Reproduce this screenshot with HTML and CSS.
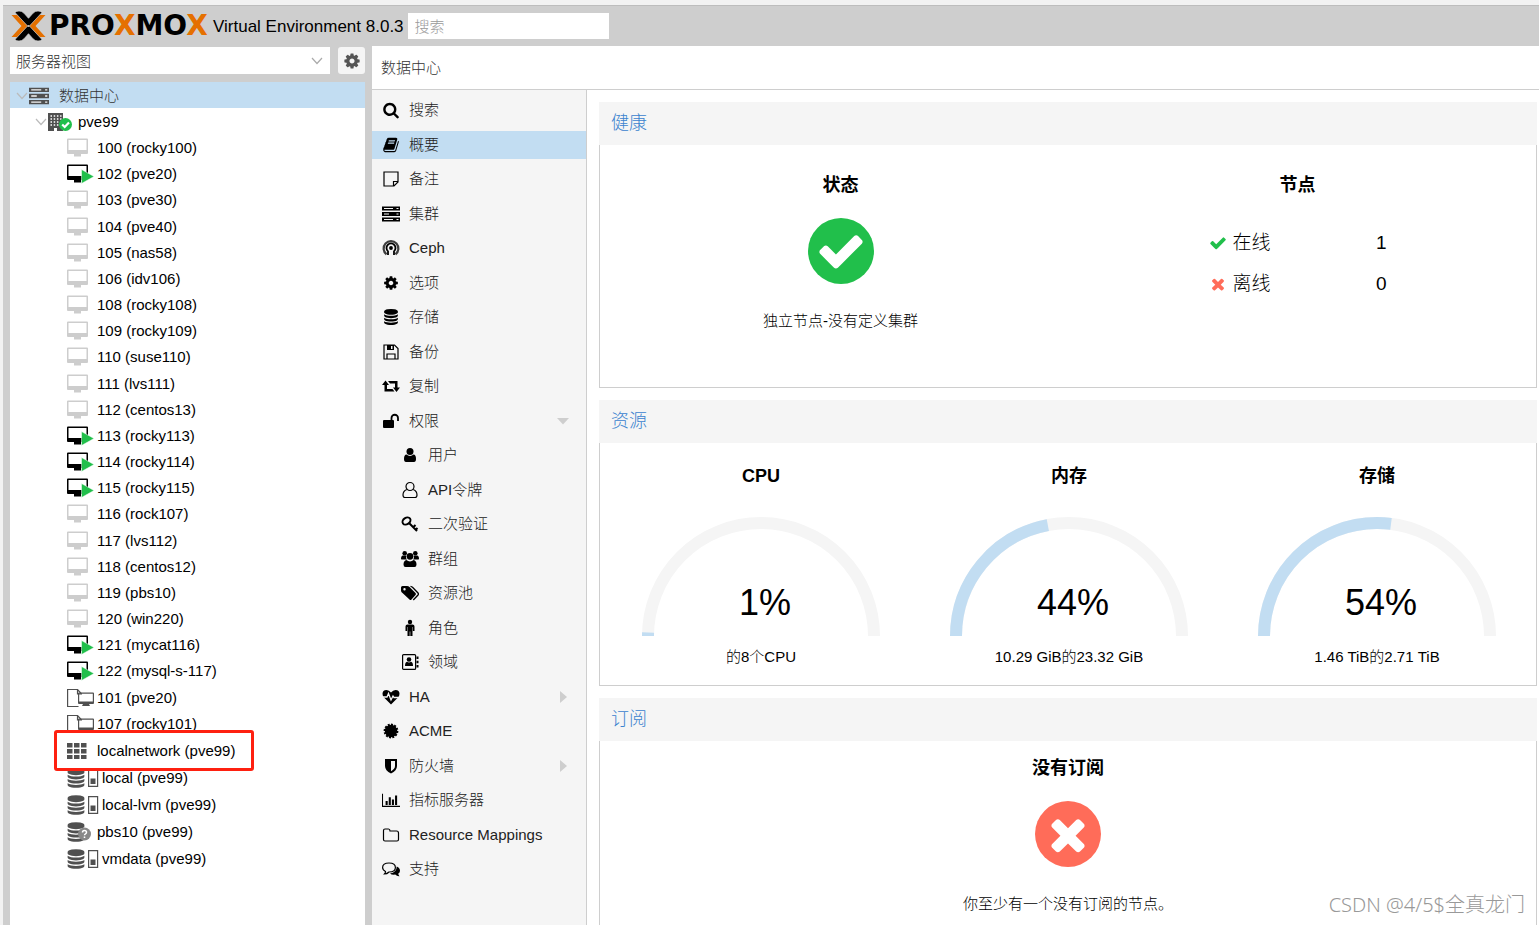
FILE: index.html
```html
<!DOCTYPE html>
<html lang="zh-CN">
<head>
<meta charset="utf-8">
<title>pve99 - Proxmox Virtual Environment</title>
<link rel="stylesheet" href="styles.css">
</head>
<body>
<svg class="defs" aria-hidden="true">
  <symbol id="cog" viewBox="-112 -112 2016 2016"><path d="M1152 896q0-106-75-181t-181-75-181 75-75 181 75 181 181 75 181-75 75-181zm512-109v222q0 12-8 23t-20 13l-185 28q-19 54-39 91 35 50 107 138 10 12 10 25t-9 23q-27 37-99 108t-94 71q-12 0-26-9l-138-108q-44 23-91 38-16 136-29 186-7 28-36 28h-222q-14 0-24.5-8.5t-11.5-21.5l-28-184q-49-16-90-37l-141 107q-10 9-25 9-14 0-25-11-126-114-165-168-7-10-7-23 0-12 8-23 15-21 51-66.5t54-70.5q-27-50-41-99l-183-27q-13-2-21-12.5t-8-23.5v-222q0-12 8-23t19-13l186-28q14-46 39-92-40-57-107-138-10-12-10-24 0-10 9-23 26-36 98.5-107.5t94.5-71.5q13 0 26 10l138 107q44-23 91-38 16-136 29-186 7-28 36-28h222q14 0 24.5 8.5t11.5 21.5l28 184q49 16 90 37l142-107q9-9 24-9 13 0 25 10 129 119 165 170 7 8 7 22 0 12-8 23-15 21-51 66.5t-54 70.5q26 50 41 98l183 28q13 2 21 12.5t8 23.5z"/></symbol>
  <symbol id="search" viewBox="-64 -64 1920 1920"><path d="M1216 832q0-185-131.5-316.5t-316.5-131.5-316.5 131.5-131.5 316.5 131.5 316.5 316.5 131.5 316.5-131.5 131.5-316.5zm512 832q0 52-38 90t-90 38q-54 0-90-38l-343-342q-179 124-399 124-143 0-273.5-55.5t-225-150-150-225-55.5-273.5 55.5-273.5 150-225 225-150 273.5-55.5 273.5 55.5 225 150 150 225 55.5 273.5q0 220-124 399l343 343q37 37 37 90z"/></symbol>
  <symbol id="book" viewBox="-64 -64 1920 1920"><path d="M1703 478q40 57 18 129l-275 906q-19 64-76.5 107.5t-122.5 43.5h-923q-77 0-148.5-53.5t-99.5-131.5q-24-67-2-127 0-4 3-27t4-37q1-8-3-21.5t-3-19.5q2-11 8-21t16.5-23.5 16.5-23.5q23-38 45-91.5t30-91.5q3-10 .5-30t-.5-28q3-11 17-28t17-23q21-36 42-92t25-90q1-9-2.5-32t.5-28q4-13 22-30.5t22-22.5q19-26 42.5-84.5t27.5-96.5q1-8-3-25.5t-2-26.5q2-8 9-18t18-23 17-21q8-12 16.5-30.5t15-35 16-36 19.5-32 26.5-23.5 36-11.5 47.5 5.5l-1 3q38-9 51-9h761q74 0 114 56t18 130l-274 906q-36 119-71.5 153.5t-128.5 34.5h-869q-27 0-38 15-11 16-1 43 24 70 144 70h923q29 0 56-15.5t35-41.5l300-987q7-22 5-57 38 15 59 43zm-1064 2q-4 13 2 22.5t20 9.5h608q13 0 25.5-9.5t16.5-22.5l21-64q4-13-2-22.5t-20-9.5h-608q-13 0-25.5 9.5t-16.5 22.5zm-83 256q-4 13 2 22.5t20 9.5h608q13 0 25.5-9.5t16.5-22.5l21-64q4-13-2-22.5t-20-9.5h-608q-13 0-25.5 9.5t-16.5 22.5z"/></symbol>
  <symbol id="database" viewBox="-112 -112 2016 2016"><path d="M896 768q237 0 443-43t325-127v170q0 69-103 128t-280 93.5-385 34.5-385-34.5-280-93.5-103-128v-170q119 84 325 127t443 43zm0 768q237 0 443-43t325-127v170q0 69-103 128t-280 93.5-385 34.5-385-34.5-280-93.5-103-128v-170q119 84 325 127t443 43zm0-384q237 0 443-43t325-127v170q0 69-103 128t-280 93.5-385 34.5-385-34.5-280-93.5-103-128v-170q119 84 325 127t443 43zm0-1152q208 0 385 34.5t280 93.5 103 128v128q0 69-103 128t-280 93.5-385 34.5-385-34.5-280-93.5-103-128v-128q0-69 103-128t280-93.5 385-34.5z"/></symbol>
  <symbol id="check" viewBox="0 0 1792 1792"><path d="M1671 566q0 40-28 68l-724 724-136 136q-28 28-68 28t-68-28l-136-136-362-362q-28-28-28-68t28-68l136-136q28-28 68-28t68 28l294 295 656-657q28-28 68-28t68 28l136 136q28 28 28 68z"/></symbol>
  <symbol id="times" viewBox="0 0 1792 1792"><path d="M1490 1322q0 40-28 68l-136 136q-28 28-68 28t-68-28l-294-294-294 294q-28 28-68 28t-68-28l-136-136q-28-28-28-68t28-68l294-294-294-294q-28-28-28-68t28-68l136-136q28-28 68-28t68 28l294 294 294-294q28-28 68-28t68 28l136 136q28 28 28 68t-28 68l-294 294 294 294q28 28 28 68z"/></symbol>
  <symbol id="note" viewBox="0 0 18 18"><path d="M2 2h14v10l-4 4H2z M16 11.500h-4.500V16" fill="none" stroke="currentColor" stroke-width="1.200"/></symbol>
  <symbol id="server" viewBox="0 0 18 18"><path d="M0 1.500h18v4H0z M0 7h18v4H0z M0 12.500h18v4H0z"/><path d="M2 3.500h9 M2 9h5 M2 14.500h9 M14.500 3.500h2 M14.500 9h2 M14.500 14.500h2" stroke="#f5f5f5" stroke-width="1.200"/></symbol>
  <symbol id="ceph" viewBox="0 0 18 18"><g fill="none" stroke="currentColor"><path d="M4.500 15.400A7.400 7.400 0 1 1 13.500 15.400" stroke-width="2.200" opacity=".75"/><path d="M6 16V12.300A4.500 4.500 0 1 1 12 12.300V16" stroke-width="1.800"/></g><circle cx="9" cy="9" r="1.900"/></symbol>
  <symbol id="save" viewBox="0 0 18 18"><path d="M2 2h10.500L16 5.500V16H2z M5 16v-5h8v5" fill="none" stroke="currentColor" stroke-width="1.200"/><path d="M5 2h7v5H5z"/><path d="M9 3h1.500v3H9z" fill="#f5f5f5"/></symbol>
  <symbol id="retweet" viewBox="0 0 18 18"><path d="M0 8 3.500 3.500 7 8H5v4h5.500l2 2.500H2.500V8z M18 10.500 14.500 15 11 10.500h2v-4H8L6 4h9.500v6.500z"/></symbol>
  <symbol id="unlock" viewBox="0 0 18 18"><rect x="1" y="8" width="11" height="8" rx="1"/><path d="M9.500 8V6a3.200 3.200 0 0 1 6.500 0v3" fill="none" stroke="currentColor" stroke-width="1.800"/></symbol>
  <symbol id="user" viewBox="0 0 18 18"><circle cx="9" cy="5.500" r="3.500"/><path d="M5.500 8.500a5 5 0 0 0 7 0q2.500 0 2.500 4.500 0 3-2 3H5q-2 0-2-3 0-4.500 2.500-4.500z"/></symbol>
  <symbol id="user-o" viewBox="0 0 18 18"><g fill="none" stroke="currentColor" stroke-width="1.200"><circle cx="9" cy="5.500" r="4"/><path d="M5.800 8.500Q2 10 2 14q0 2.500 2 2.500h10q2 0 2-2.500 0-4-3.800-5.500"/></g></symbol>
  <symbol id="key" viewBox="0 0 18 18"><g fill="none" stroke="currentColor" stroke-width="2"><ellipse cx="5.500" cy="6" rx="4.300" ry="3.200" transform="rotate(-35 5.500 6)"/><path d="M8 8l8 8 M12 12.500l2.500-2.500 M14.500 15l2-2"/></g></symbol>
  <symbol id="users" viewBox="0 0 18 18"><circle cx="3.700" cy="3.300" r="2.300"/><circle cx="14.300" cy="3.300" r="2.300"/><circle cx="9" cy="6.300" r="3.400"/><path d="M0 9q0-3.500 2-3.500h3q-.5 3 1 4H2q-2 0-2-.5z M18 9q0-3.500-2-3.500h-3q.5 3-1 4h4q2 0 2-.5z M5.500 10a5 5 0 0 0 7 0q3 .5 3 4.500 0 2.500-2 2.500h-9q-2 0-2-2.500 0-4 3-4.500z"/></symbol>
  <symbol id="tags" viewBox="0 0 18 18"><path fill-rule="evenodd" d="M0 3.500Q0 2 1.500 2H6q1.500 0 2.500 1l6 6q1 1 0 2l-4 4.500q-1 1-2 0l-7-6.500Q0 8 0 6.500z M2.300 5.200a1.200 1.200 0 1 0 2.400 0a1.200 1.200 0 1 0-2.400 0z"/><path d="M9.500 2.300q1.200.2 2 1l5.500 5.700q.8 1 0 2L12.300 16" fill="none" stroke="currentColor" stroke-width="1.300"/></symbol>
  <symbol id="male" viewBox="0 0 18 18"><circle cx="9" cy="3" r="2.200"/><path d="M6.500 5.500h5q2 0 2 2V12h-1.600V8h-.4v9H9.300v-4.500h-.6V17H6.500V8h-.4v4H4.500V7.500q0-2 2-2z"/></symbol>
  <symbol id="address" viewBox="0 0 18 18"><rect x="1.600" y="1.600" width="13" height="14.800" rx="1" fill="none" stroke="currentColor" stroke-width="1.200"/><circle cx="8" cy="6.500" r="2.300"/><path d="M4 13q0-4 2-4.300 2 1.500 4 0 2 .3 2 4.300z M15.500 3.500h2v2.500h-2z M15.500 7.800h2v2.500h-2z M15.500 12h2v2.500h-2z"/></symbol>
  <symbol id="heart" viewBox="0 0 18 18"><path d="M9 16.500 2 9.500Q.5 8 .5 5.800.5 2 4.500 2 7 2 9 4.500 11 2 13.500 2q4 0 4 3.800Q17.500 8 16 9.500z"/><path d="M0 9h5l1.500-3.500L9 12l2-4 1 1.500h6" fill="none" stroke="#f5f5f5" stroke-width="1.300"/></symbol>
  <symbol id="cert" viewBox="0 0 18 18"><circle cx="9" cy="9" r="6.200"/><circle cx="9" cy="9" r="6" fill="none" stroke="currentColor" stroke-width="2.800" pathLength="24" stroke-dasharray="1.200 .8"/></symbol>
  <symbol id="shield" viewBox="0 0 18 18"><path fill-rule="evenodd" d="M3 2h12v7q0 4.500-6 7.500Q3 13.500 3 9z M9 4v10.300q4-2.300 4-5.300V4z"/></symbol>
  <symbol id="chart" viewBox="0 0 20 18"><path d="M.5 2v14H20" fill="none" stroke="currentColor" stroke-width="1.300"/><path d="M4 10h2.300v4.500H4z M7.500 6h2.300v8.500H7.500z M11 8.500h2.300v6H11z M14.500 4h2.300v10.500h-2.300z"/></symbol>
  <symbol id="folder" viewBox="0 0 18 18"><path d="M3 3h3.500q1.500 0 1.500 2h6.500Q16.500 5 16.500 7v6.500q0 1.500-1.500 1.500H3q-1.500 0-1.500-1.500v-9Q1.500 3 3 3z" fill="none" stroke="currentColor" stroke-width="1.200"/></symbol>
  <symbol id="comments" viewBox="0 0 18 18"><path d="M3.500 11.500Q.6 10 .6 7.500.6 3 7 3t6.400 4.500Q13.400 12 7 12q-2 2-4.500 2 1-1 1-2.500z" fill="none" stroke="currentColor" stroke-width="1.200"/><path d="M14.700 6.500q3.300 1.500 3.300 4.300 0 1.800-1.800 3 .3 1.500 1.300 2.400-2.500.2-4.300-1.600-3.500.4-5.200-1.100 6.700-1 6.700-7z"/></symbol>
  <symbol id="caret-right" viewBox="0 0 8 12"><path d="M1 0 8 6 1 12z"/></symbol>
  <symbol id="caret-down" viewBox="0 0 12 8"><path d="M0 1h12L6 7.500z"/></symbol>
  <symbol id="chevron" viewBox="0 0 12 8"><path d="M1 1l5 5.500L11 1" fill="none" stroke="currentColor" stroke-width="1.200"/></symbol>
  <symbol id="building" viewBox="0 0 24 20"><path d="M0 1h15v18H0z"/><g stroke="#fff" stroke-width="1.500" stroke-dasharray="1.500 1.700"><path d="M2.500 4h11 M2.500 7h11 M2.500 10h11 M2.500 13h11"/></g><path d="M6 16h3v3H6z" fill="#fff"/><circle cx="17.500" cy="12.500" r="6.500" fill="#21bf4b"/><path d="M14.200 12.500l2.500 2.500 4.300-4.500" fill="none" stroke="#fff" stroke-width="2.200"/></symbol>
  <symbol id="vm" viewBox="0 0 27 20"><path fill-rule="evenodd" d="M1 .5h19q1 0 1 1V15q0 1-1 1h-6v2.500H7V16H1q-1 0-1-1V1.500q0-1 1-1z M1.500 2v10h18V2z"/></symbol>
  <symbol id="vm-on" viewBox="0 0 27 20"><use href="#vm" width="27" height="20"/><path d="M14.500 5.500 27 12.500 14.500 19.500z" fill="#21bf4b" stroke="#fff" stroke-width=".5"/></symbol>
  <symbol id="template" viewBox="0 0 27 20"><path d="M11.500 18.500H.6V1.500h10l4 4.500 M10.500 1.500V6H15" fill="none" stroke="currentColor" stroke-width="1.200"/><path fill-rule="evenodd" d="M12 4.500h14q1 0 1 1V15q0 1-1 1h-4l1 2h-8l1-2h-4q-1 0-1-1V5.500q0-1 1-1z M12.200 5.700v7.800h13.600V5.700z"/></symbol>
  <symbol id="grid" viewBox="0 0 27 20"><path d="M0 2h5.500v4.500H0z M7 2h5.500v4.500H7z M14 2h5.500v4.500H14z M0 8h5.500v4.500H0z M7 8h5.500v4.500H7z M14 8h5.500v4.500H14z M0 14h5.500v4H0z M7 14h5.500v4H7z M14 14h5.500v4H14z"/></symbol>
  <symbol id="storage" viewBox="0 0 32 20"><use href="#database" x="-2" y="-1" width="22" height="22"/><path d="M21.600 1.600h9v16.800h-9z" fill="none" stroke="currentColor" stroke-width="1.200"/><path d="M23.500 10.500h5V16h-5z"/></symbol>
  <symbol id="storage-unknown" viewBox="0 0 27 20"><use href="#database" x="-2" y="-1" width="22" height="22"/><circle cx="17.500" cy="12" r="6.500" fill="#888"/><path d="M15.500 10.500q0-2 2-2t2 1.800q0 1-1 1.500t-1 1.500 M17.500 14.500v1.500" fill="none" stroke="#fff" stroke-width="1.500"/></symbol>
</svg>

<div class="app">
  <header class="topbar">
    <div class="brand">
      <svg class="brand-mark" viewBox="0 0 34 32" aria-hidden="true"><path d="M0 5h5q3 0 5 2l8 9-8 9q-2 2-5 2H0l10-11z M34 5h-5q-3 0-5 2l-8 9 8 9q2 2 5 2h5L24 16z" fill="#e57000"/><path d="M3.500 2.500Q5 1 7.500 1q3 0 5 2.200L17 8.300l4.500-5.100Q23.500 1 26.500 1q2.500 0 4 1.500L17 17z M3.500 29.500Q5 31 7.500 31q3 0 5-2.200l4.500-5.100 4.500 5.100q2 2.200 5 2.200 2.500 0 4-1.500L17 15z" stroke="#cecece" stroke-width=".7"/></svg>
      <span class="brand-name">PRO<span class="accent">X</span>MO<span class="accent">X</span></span>
    </div>
    <span class="version">Virtual Environment 8.0.3</span>
    <input class="global-search" type="search" placeholder="搜索" aria-label="搜索">
  </header>

  <aside class="sidebar">
    <div class="view-bar">
      <div class="view-select">
        <select aria-label="视图"><option>服务器视图</option></select>
        <svg class="chevron"><use href="#chevron"/></svg>
      </div>
      <button class="gear" type="button" aria-label="设置"><svg><use href="#cog"/></svg></button>
    </div>
    <ul class="tree">
      <li class="root selected"><svg class="chevron"><use href="#chevron"/></svg><svg class="ico-dc"><use href="#server"/></svg><a href="#">数据中心</a></li>
      <li class="node"><svg class="chevron"><use href="#chevron"/></svg><svg class="ico-node"><use href="#building"/></svg><a href="#">pve99</a></li>
      <li class="off"><svg><use href="#vm"/></svg><a href="#">100 (rocky100)</a></li>
      <li class="on"><svg><use href="#vm-on"/></svg><a href="#">102 (pve20)</a></li>
      <li class="off"><svg><use href="#vm"/></svg><a href="#">103 (pve30)</a></li>
      <li class="off"><svg><use href="#vm"/></svg><a href="#">104 (pve40)</a></li>
      <li class="off"><svg><use href="#vm"/></svg><a href="#">105 (nas58)</a></li>
      <li class="off"><svg><use href="#vm"/></svg><a href="#">106 (idv106)</a></li>
      <li class="off"><svg><use href="#vm"/></svg><a href="#">108 (rocky108)</a></li>
      <li class="off"><svg><use href="#vm"/></svg><a href="#">109 (rocky109)</a></li>
      <li class="off"><svg><use href="#vm"/></svg><a href="#">110 (suse110)</a></li>
      <li class="off"><svg><use href="#vm"/></svg><a href="#">111 (lvs111)</a></li>
      <li class="off"><svg><use href="#vm"/></svg><a href="#">112 (centos13)</a></li>
      <li class="on"><svg><use href="#vm-on"/></svg><a href="#">113 (rocky113)</a></li>
      <li class="on"><svg><use href="#vm-on"/></svg><a href="#">114 (rocky114)</a></li>
      <li class="on"><svg><use href="#vm-on"/></svg><a href="#">115 (rocky115)</a></li>
      <li class="off"><svg><use href="#vm"/></svg><a href="#">116 (rock107)</a></li>
      <li class="off"><svg><use href="#vm"/></svg><a href="#">117 (lvs112)</a></li>
      <li class="off"><svg><use href="#vm"/></svg><a href="#">118 (centos12)</a></li>
      <li class="off"><svg><use href="#vm"/></svg><a href="#">119 (pbs10)</a></li>
      <li class="off"><svg><use href="#vm"/></svg><a href="#">120 (win220)</a></li>
      <li class="on"><svg><use href="#vm-on"/></svg><a href="#">121 (mycat116)</a></li>
      <li class="on"><svg><use href="#vm-on"/></svg><a href="#">122 (mysql-s-117)</a></li>
      <li><svg><use href="#template"/></svg><a href="#">101 (pve20)</a></li>
      <li><svg><use href="#template"/></svg><a href="#">107 (rocky101)</a></li>
      <li class="network"><svg><use href="#grid"/></svg><a href="#">localnetwork (pve99)</a></li>
      <li class="store"><svg class="wide"><use href="#storage"/></svg><a href="#">local (pve99)</a></li>
      <li class="store"><svg class="wide"><use href="#storage"/></svg><a href="#">local-lvm (pve99)</a></li>
      <li class="store"><svg><use href="#storage-unknown"/></svg><a href="#">pbs10 (pve99)</a></li>
      <li class="store"><svg class="wide"><use href="#storage"/></svg><a href="#">vmdata (pve99)</a></li>
    </ul>
  </aside>

  <div class="workspace">
    <div class="crumb">数据中心</div>
    <nav class="menu">
      <a href="#"><svg><use href="#search"/></svg>搜索</a>
      <a href="#" class="selected"><svg><use href="#book"/></svg>概要</a>
      <a href="#"><svg><use href="#note"/></svg>备注</a>
      <a href="#"><svg><use href="#server"/></svg>集群</a>
      <a href="#"><svg><use href="#ceph"/></svg>Ceph</a>
      <a href="#"><svg><use href="#cog"/></svg>选项</a>
      <a href="#"><svg><use href="#database"/></svg>存储</a>
      <a href="#"><svg><use href="#save"/></svg>备份</a>
      <a href="#"><svg><use href="#retweet"/></svg>复制</a>
      <a href="#"><svg><use href="#unlock"/></svg>权限<svg class="caret"><use href="#caret-down"/></svg></a>
      <a href="#" class="sub"><svg><use href="#user"/></svg>用户</a>
      <a href="#" class="sub"><svg><use href="#user-o"/></svg>API令牌</a>
      <a href="#" class="sub"><svg><use href="#key"/></svg>二次验证</a>
      <a href="#" class="sub"><svg><use href="#users"/></svg>群组</a>
      <a href="#" class="sub"><svg><use href="#tags"/></svg>资源池</a>
      <a href="#" class="sub"><svg><use href="#male"/></svg>角色</a>
      <a href="#" class="sub"><svg><use href="#address"/></svg>领域</a>
      <a href="#"><svg><use href="#heart"/></svg>HA<svg class="caret"><use href="#caret-right"/></svg></a>
      <a href="#"><svg><use href="#cert"/></svg>ACME</a>
      <a href="#"><svg><use href="#shield"/></svg>防火墙<svg class="caret"><use href="#caret-right"/></svg></a>
      <a href="#"><svg><use href="#chart"/></svg>指标服务器</a>
      <a href="#"><svg><use href="#folder"/></svg>Resource Mappings</a>
      <a href="#"><svg><use href="#comments"/></svg>支持</a>
    </nav>
    <main class="content">
      <section class="panel">
        <h2>健康</h2>
        <div class="body health">
          <div class="cell">
            <h3>状态</h3>
            <span class="badge ok"><svg><use href="#check"/></svg></span>
            <p>独立节点-没有定义集群</p>
          </div>
          <div class="cell">
            <h3>节点</h3>
            <table class="nodes">
              <tr><th scope="row"><svg class="online"><use href="#check"/></svg>在线</th><td>1</td></tr>
              <tr><th scope="row"><svg class="offline"><use href="#times"/></svg>离线</th><td>0</td></tr>
            </table>
          </div>
        </div>
      </section>
      <section class="panel">
        <h2>资源</h2>
        <div class="body resources">
          <div class="cell">
            <h3>CPU</h3>
            <div class="gauge"><svg viewBox="0 0 238 119"><path class="track" d="M6 119a113 113 0 0 1 226 0"/><path class="value" d="M6 119a113 113 0 0 1 226 0" pathLength="100" stroke-dasharray="1 200"/></svg><span>1%</span></div>
            <p>的8个CPU</p>
          </div>
          <div class="cell">
            <h3>内存</h3>
            <div class="gauge"><svg viewBox="0 0 238 119"><path class="track" d="M6 119a113 113 0 0 1 226 0"/><path class="value" d="M6 119a113 113 0 0 1 226 0" pathLength="100" stroke-dasharray="44 200"/></svg><span>44%</span></div>
            <p>10.29 GiB的23.32 GiB</p>
          </div>
          <div class="cell">
            <h3>存储</h3>
            <div class="gauge"><svg viewBox="0 0 238 119"><path class="track" d="M6 119a113 113 0 0 1 226 0"/><path class="value" d="M6 119a113 113 0 0 1 226 0" pathLength="100" stroke-dasharray="54 200"/></svg><span>54%</span></div>
            <p>1.46 TiB的2.71 TiB</p>
          </div>
        </div>
      </section>
      <section class="panel">
        <h2>订阅</h2>
        <div class="body subscription">
          <div class="cell">
            <h3>没有订阅</h3>
            <span class="badge bad"><svg><use href="#times"/></svg></span>
            <p>你至少有一个没有订阅的节点。</p>
          </div>
        </div>
      </section>
    </main>
  </div>
  <div class="watermark">CSDN @4/5$全真龙门</div>
</div>
</body>
</html>
```
FILE: styles.css
```css
*, ::after { box-sizing: border-box; }

body {
  margin: 0;
  background: #f2f2f2;
  color: #000;
  font: 300 15px/20px "Liberation Sans", "Noto Sans CJK SC", sans-serif;
}

a { color: inherit; text-decoration: none; }
svg { fill: currentColor; flex: none; }
h2, h3, p, ul { margin: 0; padding: 0; }
ul { list-style: none; }
.defs { position: absolute; width: 0; height: 0; }

.app {
  position: relative;
  height: 100vh;
  overflow: hidden;
  border: solid #f2f2f2;
  border-width: 5px 0 0 3px;
  background: #cecece;
  display: grid;
  grid-template: 41px minmax(0, 1fr) / 369px minmax(0, 1fr);
}

/* Top bar */
.topbar {
  grid-column: 1 / -1;
  border-top: 1px solid #bdbdbd;
  padding-left: 8px;
  display: flex;
  align-items: center;
}
.brand { min-width: 202px; display: flex; align-items: center; gap: 3px; }
.brand-mark { width: 35px; height: 32px; }
.brand-name { font: bold 28px/32px "DejaVu Sans", sans-serif; }
.accent { color: #e57000; }
.version { padding-top: 2px; font-size: 17px; white-space: nowrap; }
.global-search {
  width: 201px;
  height: 26px;
  margin-left: 4px;
  padding: 0 7px;
  border: 0;
  background: #fff;
  font: inherit;
}
.global-search::placeholder { color: #999; }

/* Resource tree */
.sidebar {
  padding: 1px 7px 0 7px;
  display: flex;
  flex-direction: column;
  gap: 8px;
}
.view-bar { display: flex; gap: 8px; }
.view-select { position: relative; flex: 1; }
.view-select select {
  appearance: none;
  width: 100%;
  height: 27px;
  padding: 2px 6px 0;
  border: 0;
  border-radius: 0;
  background: #fff;
  color: #333;
  font: inherit;
}
.view-select .chevron { position: absolute; right: 7px; top: 10px; color: #aaa; }
.chevron { width: 12px; height: 8px; color: #bbb; }
.gear {
  width: 27px;
  height: 27px;
  padding: 0;
  border: 0;
  border-radius: 3px;
  background: #f5f5f5;
  color: #555;
  display: grid;
  place-items: center;
}
.gear svg { width: 20px; height: 20px; }

.tree { flex: 1; background: #fff; }
.tree li {
  height: 26px;
  padding: 2px 0 0 57px;
  display: flex;
  align-items: center;
  gap: 3px;
  color: #505050;
}
.tree li:nth-child(6n), .tree .network, .tree .store { height: 27px; }
.tree svg:not(.chevron) { width: 27px; height: 20px; }
.tree a { color: #000; }
.tree .off { color: #cdcdcd; }
.tree .on { color: #000; }
.tree svg.wide { width: 32px; }
.tree .root { padding-left: 6px; gap: 1px; }
.tree .root a { margin-left: 9px; color: #333; }
.tree svg.ico-dc { width: 20px; }
.tree .node { padding-left: 25px; gap: 1px; }
.tree .node a { margin-left: 5px; }
.tree svg.ico-node { width: 24px; }
.tree .network { position: relative; }
.network::after {
  content: "";
  position: absolute;
  inset: -6px auto -8px 44px;
  width: 200px;
  border: 3px solid #fe2010;
  border-radius: 3px;
}
.selected { background: #c2ddf2; }

/* Workspace */
.workspace {
  min-height: 0;
  background: #fff;
  display: grid;
  grid-template: 44px minmax(0, 1fr) / 215px minmax(0, 1fr);
}
.crumb {
  grid-column: 1 / -1;
  padding: 12px 9px;
  border-bottom: 1px solid #cecece;
  color: #333;
}
.menu {
  padding-top: 6px;
  background: #f5f5f5;
  border-right: 1px solid #cecece;
  overflow: hidden;
}
.menu a {
  height: 28px;
  margin-bottom: 7px;
  padding: 0 17px 0 10px;
  display: flex;
  align-items: center;
  gap: 9px;
  color: #222;
}
.menu a:nth-child(even) { margin-bottom: 6px; }
.menu svg { width: 18px; height: 18px; color: #000; }
.menu .sub { padding-left: 29px; }
.menu svg.caret { width: 12px; height: 12px; margin-left: auto; color: #cecece; }

.content {
  padding: 12px 2px 0 12px;
  overflow: hidden;
  display: flex;
  flex-direction: column;
  gap: 12px;
}
.panel { flex: none; }
.panel h2 {
  padding: 9px 12px 10px;
  background: #f5f5f5;
  color: #3b83cf;
  font-size: 18px;
  line-height: 24px;
  font-weight: 300;
}
.body {
  height: 243px;
  border: 1px solid #cecece;
  border-top: 0;
  display: grid;
  grid-auto-flow: column;
  grid-auto-columns: minmax(0, 1fr);
}
.cell { display: flex; flex-direction: column; align-items: center; }
.cell h3 { font-size: 18px; line-height: 24px; font-weight: bold; }
.health { padding: 28px 10px 0 12px; }
.resources { padding: 21px 5px 0 7px; }
.subscription { padding-top: 15px; }

.badge {
  width: 66px;
  height: 66px;
  margin: 21px 0 27px;
  border-radius: 50%;
  color: #fff;
  display: grid;
  place-items: center;
}
.badge svg { width: 50px; height: 50px; }
.ok { background: #21bf4b; }
.bad { background: #ff6c59; }

.nodes {
  width: 178px;
  margin-top: 25px;
  border-collapse: collapse;
  font-size: 19px;
  line-height: 41px;
}
.nodes th, .nodes td { padding: 0; font-weight: 300; }
.nodes th { display: flex; align-items: center; gap: 6px; }
.nodes td { text-align: right; }
.nodes svg { width: 18px; height: 18px; }
.online { color: #21bf4b; }
.offline { color: #ff6c59; }

.gauge { position: relative; width: 238px; margin: 29px 0 11px; }
.gauge svg { display: block; width: 100%; }
.gauge path { fill: none; stroke-width: 12; }
.gauge .track { stroke: #f5f5f5; }
.gauge .value { stroke: #c2ddf2; }
.gauge span {
  position: absolute;
  inset: auto 0 11px;
  padding-left: 8px;
  text-align: center;
  font-size: 36px;
  line-height: 44px;
}

.watermark {
  position: absolute;
  right: 14px;
  bottom: 6px;
  color: #999;
  font: 300 20px/28px "Noto Sans", "Noto Sans CJK SC", sans-serif;
}
```
